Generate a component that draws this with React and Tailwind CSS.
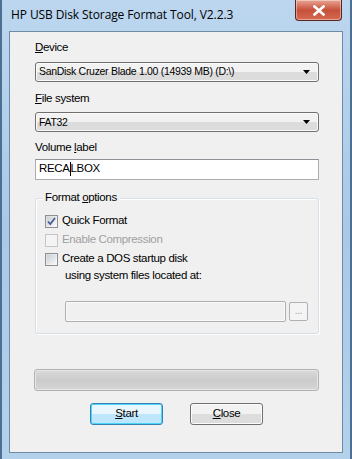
import React from 'react';

// Windows 7 style dialog - HP USB Disk Storage Format Tool

const titleFont = { fontFamily: '"Open Sans", "Noto Sans", "DejaVu Sans", sans-serif' };
const uiFont = { fontFamily: '"Liberation Sans", Arial, sans-serif' };

function Key({ children }) {
  return <span className="underline underline-offset-[1px]">{children}</span>;
}

function Combo({ text }) {
  return (
    <div className="h-[20px] w-[284px] rounded-[3px] border border-[#707070] bg-gradient-to-b from-[#f2f2f2] from-50% to-[#dcdcdc] to-50% flex items-center justify-between pl-[3px] pr-[8px] shadow-[inset_0_0_0_1px_#fafafa]">
      <span className="text-[10.5px] text-black leading-none tracking-[-0.3px]">{text}</span>
      <svg width="7" height="4" viewBox="0 0 7 4"><path d="M0 0h7L3.5 4z" fill="#000" /></svg>
    </div>
  );
}

function Check({ checked, disabled, label }) {
  return (
    <div className="flex items-center gap-[4px] h-[19px]">
      <div className={`w-[13px] h-[13px] border flex items-center justify-center ${disabled ? 'border-[#c5c5c5] bg-[#f4f4f4]' : 'border-[#8e8f8f] bg-gradient-to-br from-[#dcdcdc] to-[#fbfbfb]'}`}>
        <div className={`w-[9px] h-[9px] flex items-center justify-center ${disabled ? 'bg-[#f4f4f4]' : 'bg-gradient-to-br from-[#cbcfd5] to-[#f6f6f6]'}`}>
          {checked && (
            <svg width="9" height="9" viewBox="0 0 9 9"><path d="M1 4.5l2.3 2.6L8 1" stroke="#4a5f97" strokeWidth="1.8" fill="none" /></svg>
          )}
        </div>
      </div>
      <span className={`leading-none ${disabled ? 'text-[#a0a0a0]' : 'text-black'}`}>{label}</span>
    </div>
  );
}

export default function App() {
  return (
    <div className="w-[352px] h-[459px] overflow-hidden bg-[#c3d9ee]">
      <div className="w-full h-full flex flex-col border-l-2 border-r-2 border-[#4d6f91] bg-gradient-to-b from-[#bcd6ef] via-[#a9c9e7] to-[#b4d1ec] px-[7px] pb-[6px]">
        {/* Title bar */}
        <div className="h-[31px] flex items-start justify-between shrink-0">
          <span style={titleFont} className="text-[12px] text-black tracking-[-0.1px] pl-[2px] pt-[9px] leading-none">HP USB Disk Storage Format Tool, V2.2.3</span>
          <div className="w-[47px] h-[21px] mr-[1px] rounded-b-[4px] border border-t-0 border-[#5a2420] bg-gradient-to-b from-[#e8a493] via-[#c7503b] to-[#d36a4f] flex items-center justify-center shadow-[inset_0_0_0_1px_rgba(255,255,255,0.4)]">
            <svg width="12" height="11" viewBox="0 0 12 11"><path d="M1.5 1.5l9 8M10.5 1.5l-9 8" stroke="#fff" strokeWidth="2.6" strokeLinecap="square" /></svg>
          </div>
        </div>

        {/* Client area */}
        <div style={uiFont} className="flex-1 border border-[#6f8aa4] bg-[#f0f0f0] flex flex-col pl-[25px] text-[11.5px] tracking-[-0.35px] text-black">
          <div className="pt-[10px] leading-none"><Key>D</Key>evice</div>
          <div className="mt-[8px]"><Combo text="SanDisk Cruzer Blade 1.00 (14939 MB) (D:\)" /></div>

          <div className="mt-[11px] leading-none"><Key>F</Key>ile system</div>
          <div className="mt-[8px]"><Combo text="FAT32" /></div>

          <div className="mt-[10px] leading-none">Volume <Key>l</Key>abel</div>
          <div className="mt-[5px] h-[21px] w-[284px] border border-[#abadb3] border-t-[#8e9096] bg-white flex items-center pl-[3px]">
            <span className="leading-none">RECA</span>
            <span className="w-px h-[14px] bg-black" />
            <span className="leading-none">LBOX</span>
          </div>

          {/* Format options group */}
          <div className="mt-[18px] relative w-[284px] h-[136px] border border-[#d5dfe5] rounded-[3px] shadow-[inset_1px_1px_0_#fff,1px_1px_0_#fff] pl-[9px] pt-[13px]">
            <span className="absolute -top-[7px] left-[6px] px-[3px] bg-[#f0f0f0] leading-none">Format <Key>o</Key>ptions</span>
            <Check checked label="Quick Format" />
            <Check disabled label="Enable Compression" />
            <Check label="Create a DOS startup disk" />
            <div className="pl-[20px] pt-[1px] leading-none">using system files located at:</div>
            <div className="mt-[20px] ml-[20px] flex items-center gap-[3px]">
              <div className="w-[221px] h-[21px] rounded-[2px] border border-[#afafaf] bg-[#f0f0f0] shadow-[inset_0_0_0_1px_#fafafa]" />
              <div className="w-[19px] h-[19px] rounded-[2px] border border-[#adb2b5] bg-[#f4f4f4] flex items-end justify-center pb-[4px]">
                <span className="text-[10px] leading-none text-[#a0a0a0]">...</span>
              </div>
            </div>
          </div>

          {/* Progress bar */}
          <div className="mt-[35px] w-[285px] h-[22px] -ml-px rounded-[3px] border border-[#b2b2b2] bg-gradient-to-b from-[#dadada] via-[#cbcbcb] to-[#d6d6d6] shadow-[inset_0_0_0_1px_#e6e6e6]" />

          {/* Buttons */}
          <div className="mt-[12px] flex gap-[27px] pl-[55px]">
            <div className="w-[73px] h-[22px] rounded-[3px] border border-[#3c7fb1] bg-gradient-to-b from-[#eaf6fd] from-50% to-[#bee6fd] to-50% shadow-[inset_0_0_0_1px_#48d6fb] flex items-center justify-center">
              <span className="leading-none"><Key>S</Key>tart</span>
            </div>
            <div className="w-[73px] h-[22px] rounded-[3px] border border-[#707070] bg-gradient-to-b from-[#f2f2f2] from-50% to-[#dddddd] to-50% shadow-[inset_0_0_0_1px_#fbfbfb] flex items-center justify-center">
              <span className="leading-none"><Key>C</Key>lose</span>
            </div>
          </div>
        </div>
      </div>
    </div>
  );
}
